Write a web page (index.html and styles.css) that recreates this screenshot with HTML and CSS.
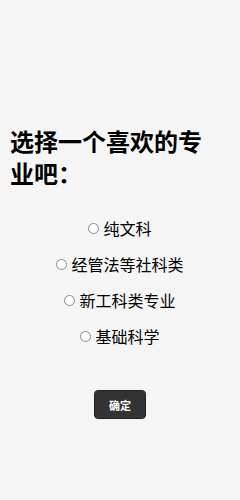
FILE: index.html
```html
<!DOCTYPE html>
<html lang="zh-CN">
<head>
<meta charset="UTF-8">
<meta name="viewport" content="width=device-width, initial-scale=1.0">
<title>选择专业</title>
<link rel="stylesheet" href="styles.css">
</head>
<body>

<div class="quiz">
    <h1>选择一个喜欢的专业吧：</h1>

    <div class="opcoes">
        <label class="opcao"><input type="radio" name="major"><span>纯文科</span></label>
        <label class="opcao"><input type="radio" name="major"><span>经管法等社科类</span></label>
        <label class="opcao"><input type="radio" name="major"><span>新工科类专业</span></label>
        <label class="opcao"><input type="radio" name="major"><span>基础科学</span></label>
    </div>

    <div class="acoes">
        <button>确定</button>
    </div>
</div>

</body>
</html>
```

FILE: styles.css
```css
body { font-family: "Noto Sans CJK SC", "Noto Sans", sans-serif; background-color: #f5f5f5; margin: 0; color: #000; }
.quiz { padding: 125px 10px 0; }
h1 { font-size: 24px; line-height: 32px; font-weight: bold; margin: 0 20px 27px 0; }
.opcoes { display: flex; flex-direction: column; align-items: center; gap: 12px; }
.opcao { display: flex; align-items: center; font-size: 16px; line-height: 24px; }
.opcao input { appearance: none; width: 11px; height: 11px; margin: 0 4px 0 0; border: 1px solid #888; border-radius: 50%; background: #fff; }
.opcao input:checked { border: 3px solid #333; }
.acoes { text-align: center; margin-top: 42px; }
button { background-color: #333; color: white; border: 1px solid #222; width: 52px; height: 29px; font-size: 11px; font-weight: bold; border-radius: 4px; font-family: inherit; cursor: pointer; }
```
